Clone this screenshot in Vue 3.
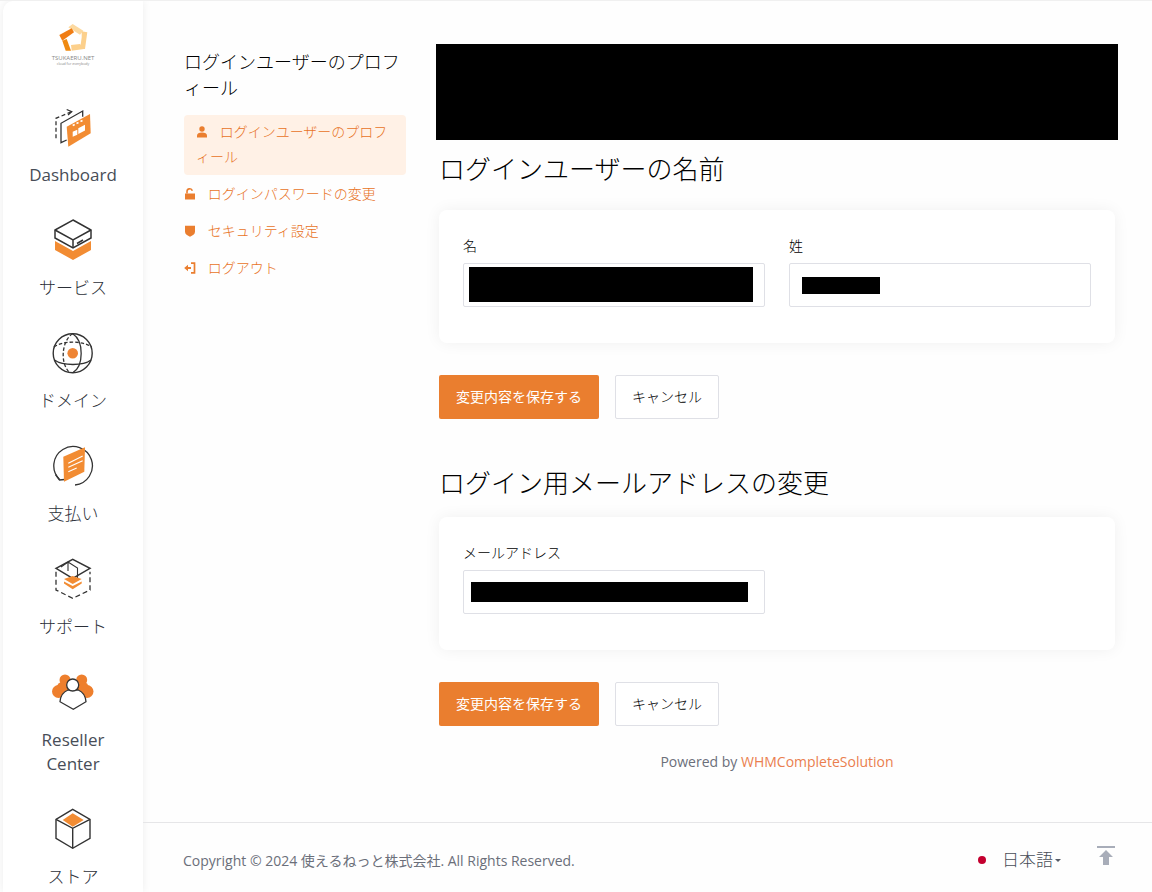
<script setup>
const nav = [
  { key: 'dash', label: 'Dashboard', latin: true },
  { key: 'serv', label: 'サービス' },
  { key: 'dom', label: 'ドメイン' },
  { key: 'pay', label: '支払い' },
  { key: 'sup', label: 'サポート' },
  { key: 'res', label: 'Reseller Center', latin: true },
  { key: 'store', label: 'ストア' },
]
</script>

<template>
  <div class="page">
    <aside class="rail">
      <div class="logo">
        <svg width="36" height="28" viewBox="0 0 36 28">
          <path d="M13.300 3.300L17.700 0 28.300 6.700 25 10.700z" fill="#fcd9a0"/>
          <path d="M26.700 7.300L32.300 8.300 30 25H25L26.700 13.300z" fill="#fcd08c"/>
          <path d="M16 21L25 20 29 25 16.700 26.700z" fill="#fcd08c"/>
          <path d="M4.300 11L16.700 4.300 19 8.300 7.300 16.700z" fill="#f07d14"/>
          <path d="M7.300 16.700L11.700 15 16 26.700H10.700z" fill="#ef8a12"/>
        </svg>
        <div class="logo-name">TSUKAERU.NET</div>
        <div class="logo-sub">cloud for everybody</div>
      </div>
      <nav class="rail-nav">
        <a v-for="item in nav" :key="item.key" class="rail-item">
          <svg class="rail-icon" viewBox="0 0 44 44" fill="none" stroke="#333" stroke-width="1.300">
            <template v-if="item.key === 'dash'">
              <path d="M5 33.300V13.300L20.700 6.700" stroke-dasharray="4 2.500"/>
              <path d="M15.700 4.500L20.700 6.700 17 10" />
              <path d="M15.700 35L10 37.700V18.300L31.700 6V11.700"/>
              <path d="M15.700 21.700L39 9 39.700 28.300 17.300 41.700z" fill="#f28c33" stroke="none"/>
              <path d="M21.700 20.500l2-1M25.500 18.500l2-1M29.500 16.500l2-1" stroke="#fff" stroke-width="1.600"/>
              <path d="M21.700 26.700l4.600-2v5l-4.600 2zM27.300 23.300l6.700-3.500v5.700l-6.700 3.500z" fill="#fff" stroke="none"/>
            </template>
            <template v-else-if="item.key === 'serv'">
              <path d="M4 23L22 33 40 23V32L22 42 4 32z" fill="#f28c33" stroke="none"/>
              <path d="M22 2L40 12V20L22 30 4 20V12z" fill="#fff" stroke-width="1.500"/>
              <path d="M4 12L22 22 40 12M22 22V30M26 25.500L32 22" stroke-width="1.500"/>
            </template>
            <template v-else-if="item.key === 'dom'">
              <circle cx="21.700" cy="22.300" r="19.500" stroke-width="1.400"/>
              <path d="M21.700 2.800C12 8 8 30 18 41" stroke-dasharray="3.500 2"/>
              <path d="M21.700 2.800C33 10 33 35 21.700 41.800"/>
              <path d="M3 16C12 9.500 32 9.500 40.500 16" stroke-dasharray="3.500 2"/>
              <path d="M3.500 29C12 35 32 35 40 29"/>
              <circle cx="21.700" cy="22.300" r="5.300" fill="#ee8434" stroke="none"/>
            </template>
            <template v-else-if="item.key === 'pay'">
              <path d="M8.500 35.500A19.300 19.300 0 1 1 24 41" stroke-width="1.300"/>
              <path d="M4.500 30.500L8.500 36 13.500 35.500" stroke-width="1.300"/>
              <path d="M12.300 12.700L34 3.300 33.300 27.700 13 37.700z" fill="#f28c33" stroke="none"/>
              <path d="M17.300 19.300L31.700 12M17.300 23.300L31.700 16.700M17.300 27.700L25.700 24" stroke="#fff" stroke-width="1.100"/>
            </template>
            <template v-else-if="item.key === 'sup'">
              <path d="M5 11.300L21.700 2.300 39 11.300 21.700 21.300z" stroke-width="1.500"/>
              <path d="M10 10L17 5V14M17 5L26.500 11V21" stroke-width="1.100"/>
              <path d="M5 14.700V33L21.700 41.300 39 33V14.700" stroke-dasharray="5 3"/>
              <path d="M13 22L21.700 19 30.700 22 21.700 27z" fill="#f28c33" stroke="none"/>
              <path d="M13 24.500L21.700 29 30.700 24.500V26.500L21.700 32.300 13 26.500z" fill="#f28c33" stroke="none"/>
            </template>
            <template v-else-if="item.key === 'res'">
              <g fill="#ee7f2d" stroke="none">
                <circle cx="14" cy="10" r="5.500"/>
                <circle cx="30.700" cy="10" r="5.500"/>
                <circle cx="7.500" cy="21.500" r="6.500"/>
                <circle cx="36" cy="21.500" r="6.500"/>
                <circle cx="12.500" cy="18.500" r="7"/>
                <circle cx="31" cy="18.500" r="7"/>
              </g>
              <path d="M17 20C12 22 9.500 26 9 31.700L22.300 39.300 35 31.700C34.500 26 32 22 27.300 20z" fill="#fff" stroke-width="1.300"/>
              <circle cx="21.700" cy="15" r="6" fill="#fff" stroke-width="1.300"/>
            </template>
            <template v-else>
              <path d="M21.700 2.300L39 12.300V31.300L21.700 41.300 5 31.300V12.300z" stroke-width="1.400"/>
              <path d="M5 12.300L21.700 21.300 39 12.300M21.700 21.300V41.300" stroke-width="1.400"/>
              <path d="M21.700 6.300L32.700 13 21.700 19.700 11.700 13z" fill="#f28c33" stroke="none"/>
            </template>
          </svg>
          <span class="rail-label" :class="{ latin: item.latin }">{{ item.label }}</span>
        </a>
      </nav>
    </aside>

    <div class="main">
      <div class="body">
        <div class="side">
          <h3 class="side-title">ログインユーザーのプロフィール</h3>
          <ul class="side-menu">
            <li class="side-link active">
              <svg class="ico first" viewBox="0 0 12 12" fill="#ea7e2f"><circle cx="6" cy="3" r="2.700"/><path d="M1 11.500V9.500C1 7.500 3 6.500 6 6.500s5 1 5 3v2z"/></svg>
              ログインユーザーのプロフィール
            </li>
            <li class="side-link">
              <svg class="ico" viewBox="0 0 12 12" fill="#ea7e2f"><path d="M1 5.500h10v6H1z"/><path d="M3 5.500V3.500a2.700 2.700 0 0 1 5.300-.7" fill="none" stroke="#ea7e2f" stroke-width="1.600"/></svg>
              ログインパスワードの変更
            </li>
            <li class="side-link">
              <svg class="ico" viewBox="0 0 12 12" fill="#ea7e2f"><path d="M1 .8h10v6c0 2.400-2.500 3.900-5 5-2.500-1.100-5-2.600-5-5z"/></svg>
              セキュリティ設定
            </li>
            <li class="side-link">
              <svg class="ico" viewBox="0 0 12 12" fill="none" stroke="#ea7e2f" stroke-width="1.700"><path d="M7 1.200h3.500v9.600H7"/><path d="M2 6h5" stroke-width="2"/><path d="M4 2.800v6.400L.2 6z" fill="#ea7e2f" stroke="none"/></svg>
              ログアウト
            </li>
          </ul>
        </div>

        <div class="content">
          <div class="redact-bar"></div>

          <h2 class="sec-title">ログインユーザーの名前</h2>
          <div class="card">
            <div class="fields">
              <div class="field">
                <label>名</label>
                <div class="input"><span class="mask mask-first"></span></div>
              </div>
              <div class="field">
                <label>姓</label>
                <div class="input"><span class="mask mask-last"></span></div>
              </div>
            </div>
          </div>
          <div class="actions">
            <button class="btn primary">変更内容を保存する</button>
            <button class="btn ghost">キャンセル</button>
          </div>

          <h2 class="sec-title second">ログイン用メールアドレスの変更</h2>
          <div class="card">
            <div class="fields">
              <div class="field">
                <label>メールアドレス</label>
                <div class="input"><span class="mask mask-mail"></span></div>
              </div>
              <div class="field"></div>
            </div>
          </div>
          <div class="actions">
            <button class="btn primary">変更内容を保存する</button>
            <button class="btn ghost">キャンセル</button>
          </div>

          <p class="powered">Powered by <a>WHMCompleteSolution</a></p>
        </div>
      </div>

      <footer class="foot">
        <span class="copy">Copyright © 2024 使えるねっと株式会社. All Rights Reserved.</span>
        <div class="foot-right">
          <span class="dot"></span>
          <span class="lang">日本語</span>
          <span class="caret"></span>
          <svg class="top" width="18" height="20" viewBox="0 0 18 20" fill="#a8adb9"><path d="M0 0h18v2H0z"/><path d="M9 4l7 7h-4v8H6v-8H2z"/></svg>
        </div>
      </footer>
    </div>
  </div>
</template>

<style>
html, body { margin: 0; padding: 0; height: 100%; overflow: hidden; }
</style>

<style scoped>
.page {
  display: flex;
  height: 892px;
  overflow: hidden;
  background: #fefefe;
  font-family: "Open Sans", "Noto Sans CJK JP", sans-serif;
  border-top: 1px solid #f0f0f0;
  box-sizing: border-box;
}
.rail {
  width: 140px;
  margin-left: 3px;
  flex: none;
  background: #fff;
  border-top-left-radius: 10px;
  overflow: hidden;
  box-shadow: 0 0 8px rgba(0,0,0,.07);
}
.logo { height: 81px; padding-top: 23px; text-align: center; color: #888; }
.logo svg { display: block; margin: 0 auto; }
.logo-name { font-size: 6px; line-height: 8px; margin-top: 2px; }
.logo-sub { font-size: 3.500px; line-height: 4px; }
.rail-nav { display: flex; flex-direction: column; }
.rail-item { display: flex; flex-direction: column; align-items: center; height: 113px; }
.rail-item:nth-child(6) { height: 137px; }
.rail-icon { width: 44px; height: 44px; flex: none; }
.rail-label {
  margin-top: 14px;
  width: 100px;
  text-align: center;
  font-size: 17px;
  line-height: 24px;
  color: #2c3038;
  font-weight: 300;
}
.rail-label.latin { font-weight: 400; color: #474d57; }

.main { flex: 1; min-width: 0; display: flex; flex-direction: column; }
.body { flex: none; height: 821px; display: flex; padding: 43px 34px 0 41px; box-sizing: border-box; }
.side { width: 222px; flex: none; }
.side-title {
  margin: 5px 0 14px;
  font-size: 18px;
  line-height: 26px;
  font-weight: 300;
  color: #000;
}
.side-menu { margin: 0; padding: 0; list-style: none; }
.side-link {
  padding: 6px 0;
  font-size: 14px;
  line-height: 25px;
  color: #e8731f;
  font-weight: 300;
}
.side-link .ico { width: 12px; height: 12px; margin-right: 8px; vertical-align: -1px; }
.side-link.active {
  background: #fff1e6;
  border-radius: 4px;
  padding: 5px 12px;
  line-height: 24.500px;
  height: 60px;
  box-sizing: border-box;
}
.side-link .ico.first { margin-right: 8px; }

.content { margin-left: 30px; width: 682px; }
.redact-bar { height: 96px; background: #000; }
.sec-title {
  margin: 10px 3px 0;
  height: 60px;
  font-size: 26px;
  line-height: 38px;
  font-weight: 300;
  color: #000;
}
.sec-title.second { margin-top: 45px; height: 53px; }
.card {
  margin: 0 3px;
  background: #fff;
  border-radius: 8px;
  box-shadow: 0 0 16px rgba(0,0,0,.06);
  padding: 26px 24px 36px;
  height: 133px;
  box-sizing: border-box;
}
.fields { display: grid; grid-template-columns: 302px 302px; column-gap: 24px; }
.field label { display: block; font-size: 14px; line-height: 20px; color: #000; margin-bottom: 7px; font-weight: 300; }
.input {
  height: 44px;
  border: 1px solid #dfe0e6;
  border-radius: 2px;
  background: #fff;
  box-sizing: border-box;
  position: relative;
}
.mask { position: absolute; background: #000; }
.mask-first { left: 5px; top: 3px; width: 284px; height: 35px; }
.mask-last { left: 12px; top: 13px; width: 78px; height: 17px; }
.mask-mail { left: 7px; top: 11px; width: 277px; height: 20px; }
.actions { display: flex; gap: 16px; margin: 32px 3px 0; }
.btn {
  height: 44px;
  font-family: inherit;
  font-size: 14px;
  border-radius: 2px;
  cursor: pointer;
  padding: 0 0 2px;
}
.primary { width: 160px; background: #ea7e2f; color: #fff; border: 0; font-weight: 400; }
.ghost { width: 104px; background: #fff; color: #000; border: 1px solid #dfe0e6; font-weight: 300; }
.powered {
  margin: 26px 0 0;
  text-align: center;
  font-size: 14px;
  line-height: 20px;
  color: #6b6f7a;
}
.powered a { color: #ea7e4f; }

.foot {
  flex: none;
  height: 70px;
  border-top: 1px solid #e6e6e8;
  display: flex;
  align-items: center;
  justify-content: space-between;
  padding: 4px 37px 0 40px;
  box-sizing: border-box;
}
.copy { font-size: 14px; color: #6b6f7a; }
.foot-right { display: flex; align-items: center; }
.dot { width: 8px; height: 8px; border-radius: 50%; background: #c4002f; margin-right: 16px; }
.lang { font-size: 17px; line-height: 24px; color: #474d57; font-weight: 300; }
.caret {
  width: 0; height: 0;
  margin: 2px 0 0 2px;
  border-left: 3.500px solid transparent;
  border-right: 3.500px solid transparent;
  border-top: 3.500px solid #555a66;
}
.top { margin-left: 36px; transform: translateY(-4px); }
</style>
